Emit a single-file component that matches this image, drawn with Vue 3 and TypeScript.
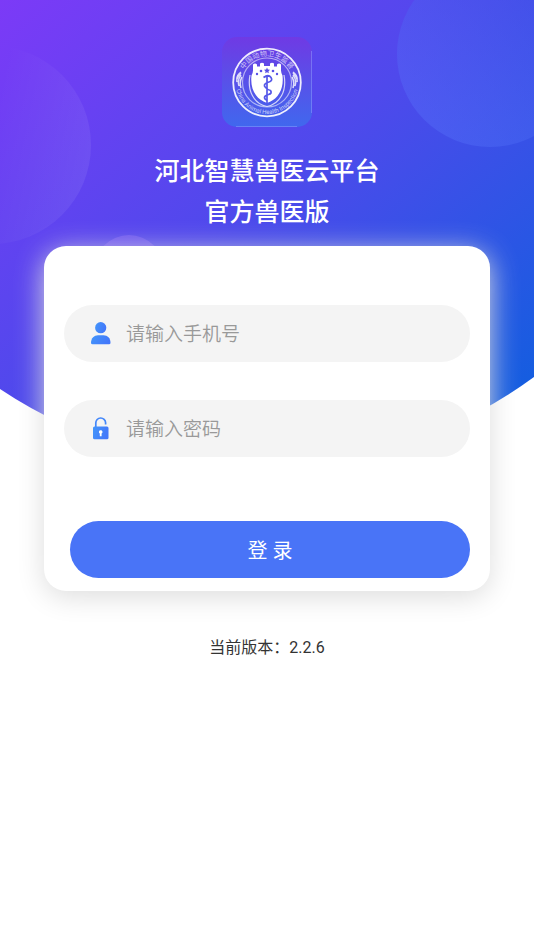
<script setup lang="ts">
import { ref } from 'vue'

const phone = ref('')
const password = ref('')
const version = '2.2.6'
</script>

<template>
  <main class="page">
    <svg class="backdrop" viewBox="0 0 534 470" aria-hidden="true">
      <defs>
        <linearGradient id="sky" gradientUnits="userSpaceOnUse" x1="10" y1="-10" x2="420" y2="470">
          <stop offset="0" stop-color="#7c3af7" />
          <stop offset="0.5" stop-color="#4f49ec" />
          <stop offset="1" stop-color="#165de0" />
        </linearGradient>
        <linearGradient id="bubble-left" x1="0.5" y1="0.4" x2="1" y2="0.5">
          <stop offset="0" stop-color="#fff" stop-opacity="0" />
          <stop offset="1" stop-color="#fff" stop-opacity="0.07" />
        </linearGradient>
        <linearGradient id="bubble-right" x1="0.2" y1="0.9" x2="0.7" y2="0.2">
          <stop offset="0" stop-color="#5c7cff" stop-opacity="0.3" />
          <stop offset="1" stop-color="#3a5ce8" stop-opacity="0.35" />
        </linearGradient>
      </defs>
      <path d="M0 0H534V377A466 466 0 0 1 0 389Z" fill="url(#sky)" />
      <circle cx="-8" cy="145" r="99" fill="url(#bubble-left)" />
      <circle cx="490" cy="54" r="93" fill="url(#bubble-right)" />
      <circle cx="129" cy="270" r="35" fill="#b98cff" fill-opacity="0.25" />
    </svg>

    <header class="brand">
      <svg class="logo" viewBox="0 0 90 90" aria-hidden="true">
        <defs>
          <linearGradient id="tile" x1="0" y1="0" x2="0" y2="1">
            <stop offset="0" stop-color="#6f3ae4" />
            <stop offset="1" stop-color="#4068ee" />
          </linearGradient>
          <path id="arc-top" d="M18.500 45.500A26.500 26.500 0 0 1 71.500 45.500" />
          <path id="arc-bottom" d="M13.500 45.500A31.500 31.500 0 0 0 76.500 45.500" />
        </defs>
        <rect width="90" height="90" rx="15" fill="url(#tile)" />
        <path d="M14 89.500H75M89.500 14V76" stroke="#8f9cff" stroke-opacity="0.5" fill="none" />
        <g fill="none" stroke="#fff">
          <circle cx="45" cy="45.500" r="33.800" stroke-width="1.800" stroke-opacity="0.9" />
          <circle cx="45" cy="45.500" r="24.500" stroke-width="1.200" stroke-opacity="0.55" />
          <path d="M19 35q-5 4-4 8m4-7q-5 5-4 9m4-7q-4 5-2 11m3-9q-3 5-1 11M71 35q5 4 4 8m-4-7q5 5 4 9m-4-7q4 5 2 11m-3-9q3 5 1 11" stroke-width="1.500" stroke-opacity="0.8" />
          <path d="M28 38c-3 16 4 29 17 31.500c13-2.500 20-15.500 17-31.500" stroke-width="1.200" stroke-opacity="0.75" />
        </g>
        <path d="M31 27.500q2-2 4 0v2h3v-3q2-1.500 4 0v2.500h6v-2.500q2-1.500 4 0v3h3v-2q2-2 4 0v6q0 2 1.500 5c1.500 13-4 22-12 26l-3.500 1.500-3.500-1.500C33.500 60.500 28 51.500 29.500 38.500q1.500-3 1.500-5z" fill="#fff" />
        <g fill="#5950e6">
          <path d="m45 30.500.9 1.900 2.100.3-1.500 1.500.3 2.100-1.800-1-1.800 1 .3-2.100-1.500-1.500 2.100-.3z" />
          <circle cx="39" cy="34" r="1.300" />
          <circle cx="51" cy="34" r="1.300" />
          <circle cx="35" cy="37" r="1.200" />
          <circle cx="55" cy="37" r="1.200" />
        </g>
        <path d="M45 38V66M41.500 40.500q5-3.500 7.500 0t-3.500 5q-5 2-2 5t5 3q2 3-2 4t-4 3 3 3" fill="none" stroke="#5557e8" stroke-width="1.700" />
        <text class="seal-cn" text-anchor="middle"><textPath href="#arc-top" startOffset="50%">中国动物卫生监督</textPath></text>
        <text class="seal-en" text-anchor="middle"><textPath href="#arc-bottom" startOffset="50%">China Animal Health Inspection</textPath></text>
      </svg>
      <h1 class="title">河北智慧兽医云平台<br />官方兽医版</h1>
    </header>

    <form class="card" @submit.prevent>
      <label class="field">
        <svg class="icon" viewBox="0 0 24 24" aria-hidden="true">
          <defs>
            <linearGradient id="accent" x1="0" y1="0" x2="1" y2="0.3">
              <stop offset="0" stop-color="#4396fa" />
              <stop offset="1" stop-color="#4378fa" />
            </linearGradient>
          </defs>
          <circle cx="11.700" cy="5.700" r="5.600" fill="url(#accent)" />
          <path d="M2 20.800C2 16 5.200 13.200 9 13.200H14.500C18.500 13.200 21.500 16 21.500 20.800Q21.500 22.300 20 22.300H3.500Q2 22.300 2 20.800Z" fill="url(#accent)" />
        </svg>
        <input v-model="phone" type="tel" placeholder="请输入手机号" aria-label="手机号" />
      </label>
      <label class="field">
        <svg class="icon" viewBox="0 0 24 24" aria-hidden="true">
          <path d="M6.800 11V6a4.900 4.900 0 0 1 9.800-.2V7.500" fill="none" stroke="#4387fa" stroke-width="1.700" />
          <rect x="4" y="9.500" width="15.500" height="12.800" rx="1.500" fill="url(#accent)" />
          <path d="M11.700 13.300a1.700 1.700 0 0 1 .9 3.200v2.800h-1.800v-2.800a1.700 1.700 0 0 1 .9-3.200z" fill="#fff" />
        </svg>
        <input v-model="password" type="password" placeholder="请输入密码" aria-label="密码" />
      </label>
      <button class="submit" type="submit">登 录</button>
    </form>

    <p class="version">当前版本：{{ version }}</p>
  </main>
</template>

<style>
body {
  background: #fff;
}
</style>

<style scoped>
.page {
  position: relative;
  display: flex;
  flex-direction: column;
  min-height: 100vh;
  overflow: hidden;
  font-family: Roboto, "Noto Sans CJK SC", sans-serif;
}

.backdrop {
  position: absolute;
  top: 0;
  left: 0;
  z-index: -1;
  width: 100%;
}

.brand {
  display: flex;
  flex-direction: column;
  align-items: center;
  gap: 24px;
  padding-top: 37px;
}

.logo {
  width: 90px;
  height: 90px;
}

.seal-cn,
.seal-en {
  fill: #fff;
  fill-opacity: 0.7;
}

.seal-cn {
  font-size: 7px;
}

.seal-en {
  font-size: 6px;
}

.title {
  margin: 0;
  color: #fff;
  font-size: 25px;
  font-weight: 500;
  line-height: 41px;
  text-align: center;
}

.card {
  display: flex;
  flex-direction: column;
  margin: 13px 44px 0;
  padding: 59px 20px 13px;
  border-radius: 22px;
  background: #fff;
  box-shadow: 0 6px 28px #ddd;
}

.field {
  display: flex;
  align-items: center;
  gap: 13px;
  height: 57px;
  margin-bottom: 38px;
  padding: 0 25px;
  border-radius: 29px;
  background: #f4f4f4;
}

.icon {
  flex: none;
  width: 24px;
  height: 24px;
}

.field input {
  flex: 1;
  min-width: 0;
  height: 32px;
  padding: 2px 0 0;
  border: 0;
  outline: 0;
  background: transparent;
  color: #333;
  font-family: inherit;
  font-size: 19px;
  font-weight: 350;
}

.field input::placeholder {
  color: #999;
  opacity: 1;
}

.submit {
  height: 57px;
  margin: 26px 0 0 6px;
  padding: 0;
  border: 0;
  border-radius: 29px;
  background: #4974f7;
  color: #fff;
  font-family: inherit;
  font-size: 20px;
  cursor: pointer;
}

.version {
  margin: 45px 0 0;
  color: #333;
  font-size: 16px;
  line-height: 24px;
  text-align: center;
}
</style>
